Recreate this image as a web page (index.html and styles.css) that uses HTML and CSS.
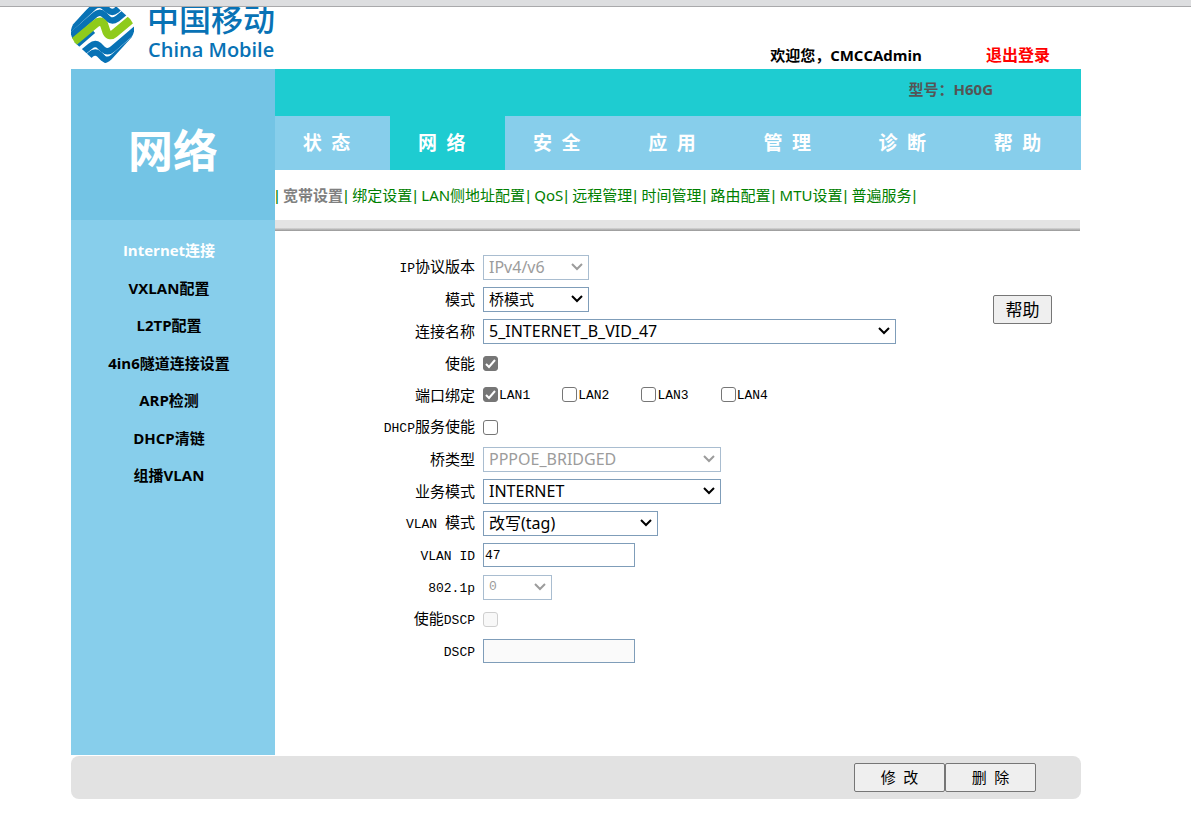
FILE: index.html
```html
<!DOCTYPE html>
<html lang="zh-CN">
<head>
<meta charset="utf-8">
<title>网络</title>
<link rel="stylesheet" href="styles.css">
</head>
<body>
<div class="topline"></div>
<div class="page">
  <header class="header">
    <div class="brand">
      <svg class="logo" viewBox="0 20 189 172" aria-hidden="true">
        <defs><clipPath id="mark"><path d="M68 4Q94-14 120 4L178 56Q200 84 182 112L122 178Q94 204 66 178L10 126Q-10 100 6 72Z"/></clipPath></defs>
        <g clip-path="url(#mark)" fill="none" stroke-linejoin="round">
          <g stroke="#0872b5" stroke-width="19">
            <path d="M-6 88L68 20Q84 6 100 20L112 30Q124 40 136 30L156 12"/>
            <path d="M-2 109L70 45Q86 30 100 44L112 56Q124 66 138 56L180 22"/>
            <path d="M-2 150L66 91M200 82L126 146Q110 160 96 148L84 136Q72 126 58 138L12 176"/>
            <path d="M200 108L126 172Q110 186 96 174L84 162Q72 152 58 164L32 188"/>
          </g>
          <path stroke="#8fcb1c" stroke-width="25" d="M0 132L74 70Q88 58 99 72L107 96Q116 112 130 100L196 45"/>
        </g>
      </svg>
      <div class="wordmark">
        <span class="wordmark-zh">中国移动</span>
        <span class="wordmark-en">China Mobile</span>
      </div>
    </div>
    <div class="account">
      <span>欢迎您，CMCCAdmin</span>
      <a class="logout" href="#">退出登录</a>
    </div>
  </header>
  <div class="columns">
    <aside class="sidebar">
      <h1 class="section-title">网络</h1>
      <nav class="side-nav">
        <a class="current" href="#">Internet连接</a>
        <a href="#">VXLAN配置</a>
        <a href="#">L2TP配置</a>
        <a href="#">4in6隧道连接设置</a>
        <a href="#">ARP检测</a>
        <a href="#">DHCP清链</a>
        <a href="#">组播VLAN</a>
      </nav>
    </aside>
    <main class="main">
      <div class="model">型号：H60G</div>
      <nav class="tabs">
        <a href="#">状&ensp;态</a>
        <a class="active" href="#">网&ensp;络</a>
        <a href="#">安&ensp;全</a>
        <a href="#">应&ensp;用</a>
        <a href="#">管&ensp;理</a>
        <a href="#">诊&ensp;断</a>
        <a href="#">帮&ensp;助</a>
      </nav>
      <nav class="subnav">| <a class="current" href="#">宽带设置</a>| <a href="#">绑定设置</a>| <a href="#">LAN侧地址配置</a>| <a href="#">QoS</a>| <a href="#">远程管理</a>| <a href="#">时间管理</a>| <a href="#">路由配置</a>| <a href="#">MTU设置</a>| <a href="#">普遍服务</a>|</nav>
      <div class="divider"></div>
      <div class="content">
        <form class="form" id="wan">
          <label for="ipver"><span class="latin">IP</span>协议版本</label>
          <div><select class="w-s" id="ipver" disabled><option>IPv4/v6</option></select></div>
          <label for="mode">模式</label>
          <div><select class="w-s zh" id="mode"><option>桥模式</option></select></div>
          <label for="conn">连接名称</label>
          <div><select class="w-xl" id="conn"><option>5_INTERNET_B_VID_47</option></select></div>
          <label for="enable">使能</label>
          <div><input type="checkbox" id="enable" checked></div>
          <span class="label">端口绑定</span>
          <div class="ports">
            <label><input type="checkbox" checked><span class="latin">LAN1</span></label>
            <label><input type="checkbox"><span class="latin">LAN2</span></label>
            <label><input type="checkbox"><span class="latin">LAN3</span></label>
            <label><input type="checkbox"><span class="latin">LAN4</span></label>
          </div>
          <label for="dhcp"><span class="latin">DHCP</span>服务使能</label>
          <div><input type="checkbox" id="dhcp"></div>
          <label for="bridge">桥类型</label>
          <div><select class="w-l" id="bridge" disabled><option>PPPOE_BRIDGED</option></select></div>
          <label for="service">业务模式</label>
          <div><select class="w-l" id="service"><option>INTERNET</option></select></div>
          <label for="vmode"><span class="latin">VLAN </span>模式</label>
          <div><select class="w-m" id="vmode"><option>改写(tag)</option></select></div>
          <label for="vid"><span class="latin">VLAN ID</span></label>
          <div><input type="text" id="vid" value="47"></div>
          <label for="prio"><span class="latin">802.1p</span></label>
          <div><select class="w-xs latin" id="prio" disabled><option>0</option></select></div>
          <label for="dscpon">使能<span class="latin">DSCP</span></label>
          <div><input type="checkbox" id="dscpon" disabled></div>
          <label for="dscp"><span class="latin">DSCP</span></label>
          <div><input type="text" id="dscp" disabled></div>
        </form>
        <button class="btn help" type="button">帮助</button>
      </div>
    </main>
  </div>
  <footer class="actions">
    <button class="btn" type="submit" form="wan">修&ensp;改</button>
    <button class="btn" type="button">删&ensp;除</button>
  </footer>
</div>
</body>
</html>
```
FILE: styles.css
```css
* { box-sizing: border-box; }
body {
  margin: 0;
  background: #fff;
  color: #000;
  font: 15px/20px "Open Sans", "Noto Sans CJK SC", sans-serif;
}
a { color: inherit; text-decoration: none; }

.topline {
  height: 7px;
  background: #dddee0;
  border-bottom: 1px solid #a9a9ab;
}
.page { padding: 0 110px 0 71px; }

.header {
  display: flex;
  justify-content: space-between;
  height: 62px;
  overflow: hidden;
}
.brand { display: flex; gap: 13px; align-items: flex-end; padding-bottom: 5px; }
.logo { width: 63px; height: 57px; }
.wordmark { display: flex; flex-direction: column; color: #0872b5; white-space: nowrap; }
.wordmark-zh { font-size: 32px; line-height: 32px; font-weight: 500; }
.wordmark-en { padding-left: 1px; font-size: 20px; line-height: 29px; font-weight: 600; }
.account {
  display: flex;
  gap: 64px;
  align-items: flex-end;
  padding: 0 31px 4px 0;
  font-weight: 700;
}
.logout { color: #f00; font-size: 16px; }

.columns { display: flex; align-items: stretch; min-height: 686px; }
.sidebar { flex: 0 0 204px; background: #87ceeb; }
.section-title {
  display: flex;
  justify-content: center;
  align-items: center;
  height: 151px;
  margin: 0;
  padding-top: 12px;
  background: #73c4e5;
  color: #fff;
  font-size: 45px;
  line-height: 64px;
  font-weight: 700;
}
.side-nav {
  display: flex;
  flex-direction: column;
  align-items: center;
  justify-content: space-between;
  height: 265px;
  padding: 20px 8px 0 0;
  font-weight: 700;
}
.side-nav .current { color: #fff; }

.main { flex: 1; min-width: 0; }
.model {
  height: 47px;
  padding: 10px 88px 0 0;
  background: #1eccd1;
  color: #555;
  font-weight: 700;
  text-align: right;
}
.tabs { display: grid; grid-template-columns: repeat(7, 1fr); background: #87ceeb; }
.tabs a {
  padding-right: 12px;
  color: #fff;
  font-size: 19px;
  line-height: 54px;
  font-weight: 700;
  text-align: center;
}
.tabs .active { background: #1eccd1; }
.subnav {
  height: 50px;
  padding-top: 15px;
  color: #008000;
  font-family: "Liberation Sans", sans-serif;
  white-space: nowrap;
}
.subnav a { margin-right: 1px; font-family: "Noto Sans", "Noto Sans CJK SC", sans-serif; }
.subnav .current { color: #808080; font-weight: 700; }
.divider {
  height: 11px;
  margin-right: 1px;
  background: linear-gradient(#e4e4e4 70%, #c4c4c4 80%, #969696);
}

.content {
  display: flex;
  justify-content: space-between;
  align-items: flex-start;
  padding: 20px 29px 0 0;
}
.form {
  display: grid;
  grid-template-columns: 200px auto;
  grid-auto-rows: 32px;
  column-gap: 8px;
  align-items: center;
}
.form > label, .label { text-align: right; white-space: nowrap; }
.form > div { display: flex; align-items: center; }
.latin { font-family: "Liberation Mono", monospace; font-size: 13px; white-space: pre; }
.ports { gap: 32px; padding-bottom: 2px; }
.ports label { display: flex; align-items: center; gap: 1px; }
.ports .latin { padding-top: 4px; }

select {
  appearance: none;
  height: 25px;
  padding: 0 20px 0 5px;
  border: 1px solid #7f9db9;
  border-radius: 0;
  background: #fff url("data:image/svg+xml,%3Csvg xmlns='http://www.w3.org/2000/svg' width='12' height='8'%3E%3Cpath d='M1 1l5 5 5-5' fill='none' stroke='%23000' stroke-width='2'/%3E%3C/svg%3E") no-repeat right 5px center;
  color: #000;
  font: 16px/20px "Noto Sans", "Noto Sans CJK SC", sans-serif;
}
select.zh { font-size: 15px; }
select.latin { font-family: "Liberation Mono", monospace; font-size: 13px; }
select:disabled {
  border-color: #a9bdd0;
  color: #9c9c9c;
  opacity: 1;
  background-image: url("data:image/svg+xml,%3Csvg xmlns='http://www.w3.org/2000/svg' width='12' height='8'%3E%3Cpath d='M1 1l5 5 5-5' fill='none' stroke='%239c9c9c' stroke-width='2'/%3E%3C/svg%3E");
}
.w-xs { width: 69px; }
.w-s { width: 106px; }
.w-m { width: 175px; }
.w-l { width: 238px; }
.w-xl { width: 413px; }

input[type="text"] {
  width: 152px;
  height: 24px;
  padding: 0 1px;
  border: 1px solid #7f9db9;
  background: #fff;
  font: 13px/20px "Liberation Mono", monospace;
}
input[type="text"]:disabled { background: #fafafa; }
input[type="checkbox"] {
  appearance: none;
  width: 15px;
  height: 15px;
  margin: 0;
  border: 1px solid #767676;
  border-radius: 3px;
  background: #fff;
}
input[type="checkbox"]:checked {
  background: #767676 url("data:image/svg+xml,%3Csvg xmlns='http://www.w3.org/2000/svg' width='13' height='13'%3E%3Cpath d='M2 7l3 3 6-7' fill='none' stroke='%23fff' stroke-width='2'/%3E%3C/svg%3E") no-repeat center;
}
input[type="checkbox"]:disabled { border-color: #cfcfcf; background: #f8f8f8; }

.btn {
  width: 91px;
  height: 29px;
  padding: 0 0 2px;
  border: 1px solid #767676;
  border-radius: 2px;
  background: #efefef;
  color: #000;
  font: 15px/20px "Open Sans", "Noto Sans CJK SC", sans-serif;
}
.help { width: 59px; margin-top: 44px; padding: 0; font-size: 17px; }
.actions {
  display: flex;
  justify-content: flex-end;
  margin-top: 1px;
  padding: 7px 45px;
  border-radius: 8px;
  background: #e2e2e2;
}
```
